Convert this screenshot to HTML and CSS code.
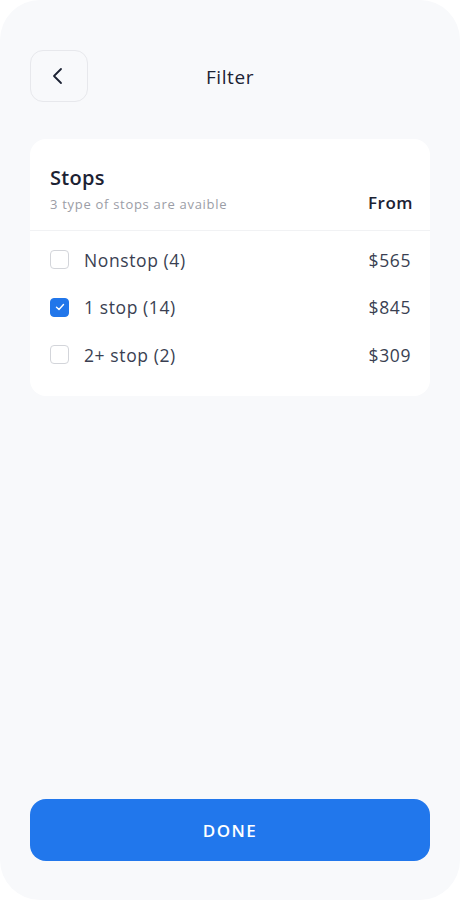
FILE: index.html
```html
<!DOCTYPE html>
<html lang="en">
<head>
    <meta charset="UTF-8">
    <meta name="viewport" content="width=device-width, initial-scale=1.0">
    <title>Filter</title>
    <link rel="stylesheet" href="styles.css">
</head>
<body>
    <div class="screen">
        <header class="top-bar">
            <button class="back-btn" aria-label="Back">
                <svg width="14" height="18" viewBox="0 0 14 18">
                    <path d="M10 2 L3 9 L10 16" fill="none" stroke="#1c2233" stroke-width="1.8" stroke-linecap="round" stroke-linejoin="round"/>
                </svg>
            </button>
            <h1 class="title">Filter</h1>
        </header>

        <section class="card">
            <div class="card-head">
                <div>
                    <h2>Stops</h2>
                    <p class="sub">3 type of stops are avaible</p>
                </div>
                <span class="from">From</span>
            </div>
            <ul class="options">
                <li>
                    <span class="check"></span>
                    <span class="label">Nonstop (4)</span>
                    <span class="price">$565</span>
                </li>
                <li>
                    <span class="check checked">
                        <svg width="10" height="8" viewBox="0 0 10 8">
                            <path d="M1.5 4.2 L4 6.5 L8.5 1.5" fill="none" stroke="#fff" stroke-width="1.4" stroke-linecap="round" stroke-linejoin="round"/>
                        </svg>
                    </span>
                    <span class="label">1 stop (14)</span>
                    <span class="price">$845</span>
                </li>
                <li>
                    <span class="check"></span>
                    <span class="label">2+ stop (2)</span>
                    <span class="price">$309</span>
                </li>
            </ul>
        </section>

        <button class="done-btn">DONE</button>
    </div>
</body>
</html>
```

FILE: styles.css
```css
* {
    box-sizing: border-box;
}
html, body {
    margin: 0;
    background: #ffffff;
}
body {
    font-family: "Open Sans", "Lato", sans-serif;
}
.screen {
    width: 460px;
    height: 900px;
    background: #f8f9fb;
    border-radius: 40px;
    padding: 50px 30px 39px;
    display: flex;
    flex-direction: column;
}
.top-bar {
    display: flex;
    align-items: center;
    height: 52px;
    position: relative;
}
.back-btn {
    width: 58px;
    height: 52px;
    border: 1px solid #e7e8ec;
    border-radius: 13px;
    background: #f8f9fb;
    display: flex;
    align-items: center;
    justify-content: center;
    padding: 0;
    padding-right: 2px;
    cursor: pointer;
}
.title {
    position: absolute;
    left: 0;
    right: 0;
    margin: 0;
    padding-top: 2px;
    text-align: center;
    font-size: 19px;
    font-weight: 500;
    letter-spacing: 0.6px;
    color: #1c2233;
    pointer-events: none;
}
.card {
    margin-top: 37px;
    background: #ffffff;
    border-radius: 16px;
}
.card-head {
    display: flex;
    justify-content: space-between;
    align-items: flex-end;
    height: 92px;
    padding: 0 17px 17px 20px;
    border-bottom: 1px solid #f1f2f4;
}
.card-head h2 {
    margin: 0;
    font-size: 20px;
    font-weight: 600;
    letter-spacing: 0.3px;
    color: #1c2233;
    line-height: 26px;
}
.sub {
    margin: 4px 0 0;
    font-size: 13px;
    line-height: 18px;
    letter-spacing: 0.7px;
    color: #9b9da6;
}
.from {
    font-size: 17px;
    font-weight: 600;
    letter-spacing: 0.5px;
    color: #1c2233;
    line-height: 20px;
}
.options {
    list-style: none;
    margin: 0;
    padding: 5px 19px 17px 20px;
}
.options li {
    display: flex;
    align-items: center;
    height: 47.5px;
}
.check {
    width: 19px;
    height: 19px;
    border: 1.5px solid #d3d5da;
    border-radius: 4px;
    display: flex;
    align-items: center;
    justify-content: center;
    margin-right: 15px;
}
.check.checked {
    background: #2176ea;
    border-color: #2176ea;
}
.label {
    flex: 1;
    font-size: 17.5px;
    letter-spacing: 0.6px;
    color: #3a3f52;
}
.price {
    font-size: 17.5px;
    letter-spacing: 0.6px;
    color: #3a3f52;
}
.done-btn {
    margin-top: auto;
    height: 62px;
    border: none;
    border-radius: 16px;
    background: #2177ec;
    color: #ffffff;
    font-family: inherit;
    font-size: 17px;
    font-weight: 600;
    letter-spacing: 1.5px;
    cursor: pointer;
}
```
